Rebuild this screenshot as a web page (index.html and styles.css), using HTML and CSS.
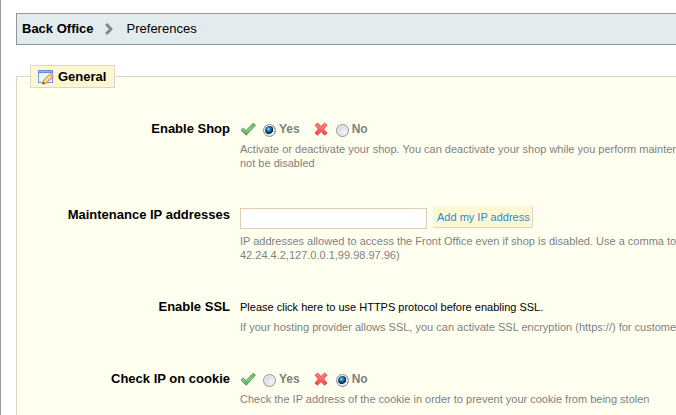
FILE: index.html
```html
<!DOCTYPE html>
<html lang="en">
<head>
    <meta charset="UTF-8">
    <meta name="viewport" content="width=device-width, initial-scale=1.0">
    <title>Preferences</title>
    <link rel="stylesheet" href="styles.css">
</head>
<body>
    <svg class="sprite" aria-hidden="true">
        <defs>
            <linearGradient id="green" x1="0" y1="0" x2="0" y2="1">
                <stop offset="0" stop-color="#5fb561"/>
                <stop offset="0.5" stop-color="#8fd28c"/>
                <stop offset="1" stop-color="#4ba04c"/>
            </linearGradient>
            <linearGradient id="red" x1="0" y1="0" x2="0" y2="1">
                <stop offset="0" stop-color="#ff8a82"/>
                <stop offset="1" stop-color="#f9494d"/>
            </linearGradient>
        </defs>
        <symbol id="check" viewBox="0 0 16 16">
            <path d="M1 9.2L3.2 7.1L6 9.6L13.2 2.3L15.4 4.1L6.3 14.2Z" fill="url(#green)" stroke="#45954a" stroke-width="0.9" stroke-linejoin="round"/>
        </symbol>
        <symbol id="cross" viewBox="0 0 16 16">
            <path d="M2 4.2L4.6 2L8 5.6L11.6 2L14 4.2L10.6 8L14 12L11.6 14.2L8 10.6L4.4 14.2L2 12L5.4 8Z" fill="url(#red)" stroke="#e8383f" stroke-width="0.9" stroke-linejoin="round"/>
        </symbol>
    </svg>
    <div class="content">
        <nav class="path_bar">
            <a href="#" class="home">Back Office</a>
            <svg class="arrow" viewBox="0 0 8 12"><path d="M1.2 1L6 6L1.2 11" fill="none" stroke="#858585" stroke-width="2.8"/></svg>
            <a href="#">Preferences</a>
        </nav>
        <form>
            <fieldset>
                <legend>
                    <svg class="icon" viewBox="0 0 16 16">
                        <rect x="0.5" y="1.5" width="14" height="12" fill="#edf4fc" stroke="#6f9bd8"/>
                        <rect x="0" y="1" width="15" height="3" fill="#5c8fdc"/>
                        <rect x="1" y="2" width="13" height="1" fill="#8db6ef"/>
                        <path d="M4.5 15.2L5.6 11.2L12.3 4.5L15.4 7.5L8.6 14.1Z" fill="#f6c66c" stroke="#b98338" stroke-width="0.8"/>
                        <path d="M7 12.4L13.5 6" stroke="#fdebb5" stroke-width="1.2"/>
                        <path d="M11.4 5.4L12.3 4.5Q14 3.8 15.4 7.5L14.4 8.4Z" fill="#e9a09a"/>
                        <path d="M4.5 15.2L5.2 12.8L6.9 14.6Z" fill="#5a4630"/>
                    </svg>
                    General
                </legend>
                <div class="row" role="radiogroup" aria-labelledby="shop_label">
                    <span class="title" id="shop_label">Enable Shop</span>
                    <div class="field">
                        <div class="control">
                            <svg class="icon"><use href="#check"/></svg>
                            <input type="radio" name="shop" id="shop_on" checked>
                            <label for="shop_on">Yes</label>
                            <svg class="icon no"><use href="#cross"/></svg>
                            <input type="radio" name="shop" id="shop_off">
                            <label for="shop_off">No</label>
                        </div>
                        <p>Activate or deactivate your shop. You can deactivate your shop while you perform maintenance<br>not be disabled</p>
                    </div>
                </div>
                <div class="row">
                    <label class="title" for="ip">Maintenance IP addresses</label>
                    <div class="field">
                        <div class="control ip">
                            <input type="text" id="ip">
                            <button type="button">Add my IP address</button>
                        </div>
                        <p>IP addresses allowed to access the Front Office even if shop is disabled. Use a comma to<br>42.24.4.2,127.0.0.1,99.98.97.96)</p>
                    </div>
                </div>
                <div class="row">
                    <span class="title">Enable SSL</span>
                    <div class="field">
                        <div class="control"><a href="#">Please click here to use HTTPS protocol before enabling SSL.</a></div>
                        <p>If your hosting provider allows SSL, you can activate SSL encryption (https://) for customer</p>
                    </div>
                </div>
                <div class="row" role="radiogroup" aria-labelledby="cookie_label">
                    <span class="title" id="cookie_label">Check IP on cookie</span>
                    <div class="field">
                        <div class="control">
                            <svg class="icon"><use href="#check"/></svg>
                            <input type="radio" name="cookie" id="cookie_on">
                            <label for="cookie_on">Yes</label>
                            <svg class="icon no"><use href="#cross"/></svg>
                            <input type="radio" name="cookie" id="cookie_off" checked>
                            <label for="cookie_off">No</label>
                        </div>
                        <p>Check the IP address of the cookie in order to prevent your cookie from being stolen</p>
                    </div>
                </div>
            </fieldset>
        </form>
    </div>
</body>
</html>
```
FILE: styles.css
```css
*{
    margin: 0;
    padding: 0;
    box-sizing: border-box;
}
html{
    overflow: hidden;
}
body{
    font-family: "Liberation Sans", Arial, sans-serif;
    font-size: 11px;
    color: #000;
    background: #fff;
}
a{
    color: #000;
    text-decoration: none;
}
.sprite{
    display: block;
    width: 0;
    height: 0;
}
.content{
    min-height: 100vh;
    padding: 13px 0 0 15px;
    border-left: 1px solid #999;
}
/* breadcrumb */
.path_bar{
    display: flex;
    align-items: center;
    height: 32px;
    padding: 0 5px 2px;
    border: 1px solid #929599;
    border-right: 0;
    background: #e2ebee;
    font-size: 13px;
}
.home{
    font-weight: bold;
}
.arrow{
    width: 8px;
    height: 12px;
    margin: 2px 14px 0 11px;
}
/* form */
fieldset{
    min-width: 0;
    margin-top: 20px;
    padding: 30px 0 10px 13px;
    border: 1px solid #dfd5c3;
    border-right: 0;
    border-bottom: 0;
    background: #fffff0;
}
legend{
    display: flex;
    align-items: center;
    gap: 4px;
    height: 23px;
    padding: 0 8px 0 7px;
    border: 1px solid #dfd5c3;
    background: #fff6d3;
    font-size: 13px;
    font-weight: bold;
}
.icon{
    flex: none;
    width: 16px;
    height: 16px;
}
.row{
    display: flex;
    gap: 10px;
    margin-bottom: 34px;
}
.row:last-child{
    margin-bottom: 0;
}
.title{
    flex: none;
    width: 200px;
    font-size: 13px;
    font-weight: bold;
    line-height: 21px;
    text-align: right;
}
.field{
    flex: 1;
    min-width: 0;
    white-space: nowrap;
}
.control{
    display: flex;
    align-items: center;
    height: 24px;
    padding-bottom: 2px;
}
.control label{
    margin-left: 3px;
    color: #7f7f7f;
    font-size: 12px;
    font-weight: bold;
}
.no{
    margin-left: 13px;
}
.ip{
    height: 30px;
    gap: 6px;
    padding-bottom: 4px;
}
input[type=radio]{
    appearance: none;
    width: 13px;
    height: 13px;
    margin: 2px 0 0 7px;
    border: 1px solid #8c8f94;
    border-radius: 50%;
    background: radial-gradient(circle at 65% 65%, #f4f4f6, #c5c9d2);
    box-shadow: inset 0 0 0 1px #f4f4f4;
}
input[type=radio]:checked{
    padding: 1px;
    background: radial-gradient(circle at 40% 35%, #b8ecfb 0, #2f8fc0 18%, #0b2f52 50%, #0b2f52 58%, #e4e8ec 62%);
    background-origin: content-box;
}
input[type=text]{
    width: 187px;
    height: 21px;
    margin-top: 2px;
    padding: 0 4px;
    border: 1px solid #dfcdb0;
    background: #fff;
    font: inherit;
}
button{
    height: 22px;
    padding: 0 2px 0 3px;
    border: 1px solid #fff6d3;
    border-right-color: #dfd5c3;
    border-bottom-color: #dfd5c3;
    background: #fff6d3;
    color: #268ccd;
    font: inherit;
}
p{
    color: #7f7f7f;
    line-height: 14px;
}
```
